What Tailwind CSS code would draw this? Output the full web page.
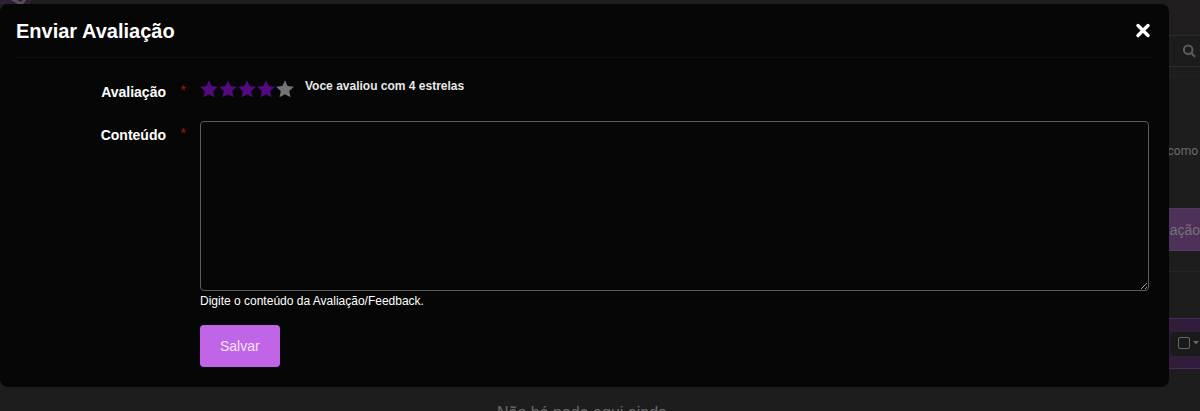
<!DOCTYPE html>
<html lang="pt-BR">
<head>
    <meta charset="UTF-8">
    <meta name="viewport" content="width=device-width, initial-scale=1.0">
    <title>Enviar Avaliação</title>
    <script src="https://cdn.jsdelivr.net/npm/@tailwindcss/browser@4"></script>
</head>
<body class="relative h-screen overflow-hidden bg-[#1d1d1d] font-['Liberation_Sans',Arial,sans-serif]">
    <svg class="hidden">
        <symbol id="star" viewBox="0 0 20 20">
            <path d="M10 .2l2.9 6.4 7 .8-5.2 4.8 1.4 7.1-6.1-3.5-6.1 3.5 1.4-7.1L.1 7.4l7-.8z"/>
        </symbol>
    </svg>

    <!-- Page behind the modal -->
    <div class="flex flex-col text-[#6b6b6b]">
        <div class="flex h-[35px] bg-[#201d1e]">
            <svg class="h-1 w-8" viewBox="0 0 32 4" preserveAspectRatio="none">
                <path fill="#2e2033" d="M0 0h32l-3 4H0z"/>
                <path fill="#5d4e5c" d="M11 0l7 4h5l3-4h-3l-2 2-4-2z"/>
            </svg>
        </div>
        <div class="flex h-8 items-center justify-end border-y border-[#2d2d2d] bg-[#1c1c1c] pr-1">
            <svg class="size-3.5" viewBox="0 0 14 14" fill="none" stroke="#5c5c5c" stroke-width="2">
                <circle cx="6.2" cy="5.8" r="4.3"/>
                <path stroke-linecap="round" d="M9.5 9.2l3 3"/>
            </svg>
        </div>
        <div class="h-2.5 border-b border-[#222]"></div>
        <p class="mt-16 pr-0.5 text-right font-[Roboto,sans-serif] text-xs leading-5">como</p>
        <div class="mt-[47px] flex justify-end">
            <button type="button" class="h-[43px] border-y border-[#563864] bg-[#4d3159] px-0 pl-12 text-sm text-[#77707a]">Avaliação</button>
        </div>
        <div class="h-5"></div>
        <div class="h-[47px] border-t border-[#262626]"></div>
        <div class="flex h-[51px] items-center justify-end border-y border-[#4a2b56] bg-[#321c3b]">
            <div class="flex h-6 w-[30px] items-center gap-0.5 rounded-l bg-[#1a1a1a] pb-0.5 pl-2">
                <input type="checkbox" aria-label="Selecionar tudo" class="size-3 shrink-0 appearance-none rounded-xs border border-[#686868]">
                <svg class="h-1 w-2 shrink-0" viewBox="0 0 8 4" fill="#686868"><path d="M1 0h6L4 3.5z"/></svg>
            </div>
        </div>
        <p class="mt-8 pr-9 text-center text-base leading-6">Não há nada aqui ainda</p>
    </div>

    <!-- Modal -->
    <div role="dialog" aria-labelledby="modalTitle" class="absolute top-1 right-[31px] left-0 rounded-lg bg-[#060606] px-4 pb-5 text-white">
        <div class="flex h-[54px] items-center justify-between border-b border-[#111]">
            <h1 id="modalTitle" class="text-xl font-bold">Enviar Avaliação</h1>
            <button type="button" id="closeModal" aria-label="Fechar" class="mr-0.5">
                <svg class="size-4" viewBox="0 0 16 16" fill="none" stroke="white" stroke-width="3.4" stroke-linecap="round">
                    <path d="M3 2.5l10 10M13 2.5l-10 10"/>
                </svg>
            </button>
        </div>

        <form class="grid grid-cols-[150px_1fr] gap-x-[34px] pt-5 pr-1">
            <div class="relative pt-1 text-right text-sm leading-5 font-bold">
                <span id="ratingLabel">Avaliação</span>
                <span class="absolute top-0.5 -right-5 font-normal text-[#a01818]">*</span>
            </div>
            <div class="flex h-[43px] items-start">
                <div id="stars" role="group" aria-labelledby="ratingLabel" class="flex pt-0.5 text-[#530a80]">
                    <button type="button" aria-label="1 estrela" class="w-[19px]"><svg class="size-[18px] fill-current"><use href="#star"/></svg></button>
                    <button type="button" aria-label="2 estrelas" class="w-[19px]"><svg class="size-[18px] fill-current"><use href="#star"/></svg></button>
                    <button type="button" aria-label="3 estrelas" class="w-[19px]"><svg class="size-[18px] fill-current"><use href="#star"/></svg></button>
                    <button type="button" aria-label="4 estrelas" class="w-[19px]"><svg class="size-[18px] fill-current"><use href="#star"/></svg></button>
                    <button type="button" aria-label="5 estrelas" class="w-[19px] text-[#747474]"><svg class="size-[18px] fill-current"><use href="#star"/></svg></button>
                </div>
                <span id="ratingText" class="ml-2.5 text-xs leading-4 font-bold text-[#e8e8e8]">Voce avaliou com 4 estrelas</span>
            </div>

            <div class="relative pt-1 text-right text-sm leading-5 font-bold">
                <label for="content">Conteúdo</label>
                <span class="absolute top-0.5 -right-5 font-normal text-[#a01818]">*</span>
            </div>
            <div>
                <textarea id="content" class="block h-[170px] w-full rounded-sm border border-[#5a5a5a] bg-transparent p-2 text-sm scheme-dark"></textarea>
                <p class="mt-0.5 text-xs leading-4 text-white">Digite o conteúdo da Avaliação/Feedback.</p>
                <button type="submit" class="mt-4 h-[42px] rounded-sm bg-[#c064e8] px-5 text-sm text-[#f5e6fb]">Salvar</button>
            </div>
        </form>
    </div>

    <script>
        const stars = document.querySelectorAll('#stars button');
        const ratingText = document.getElementById('ratingText');

        stars.forEach((star, i) => {
            star.addEventListener('click', () => {
                stars.forEach((s, j) => s.classList.toggle('text-[#747474]', j > i));
                ratingText.textContent = `Voce avaliou com ${i + 1} estrelas`;
            });
        });

        document.getElementById('closeModal').addEventListener('click', () => {
            document.querySelector('[role=dialog]').classList.add('hidden');
        });
    </script>
</body>
</html>
